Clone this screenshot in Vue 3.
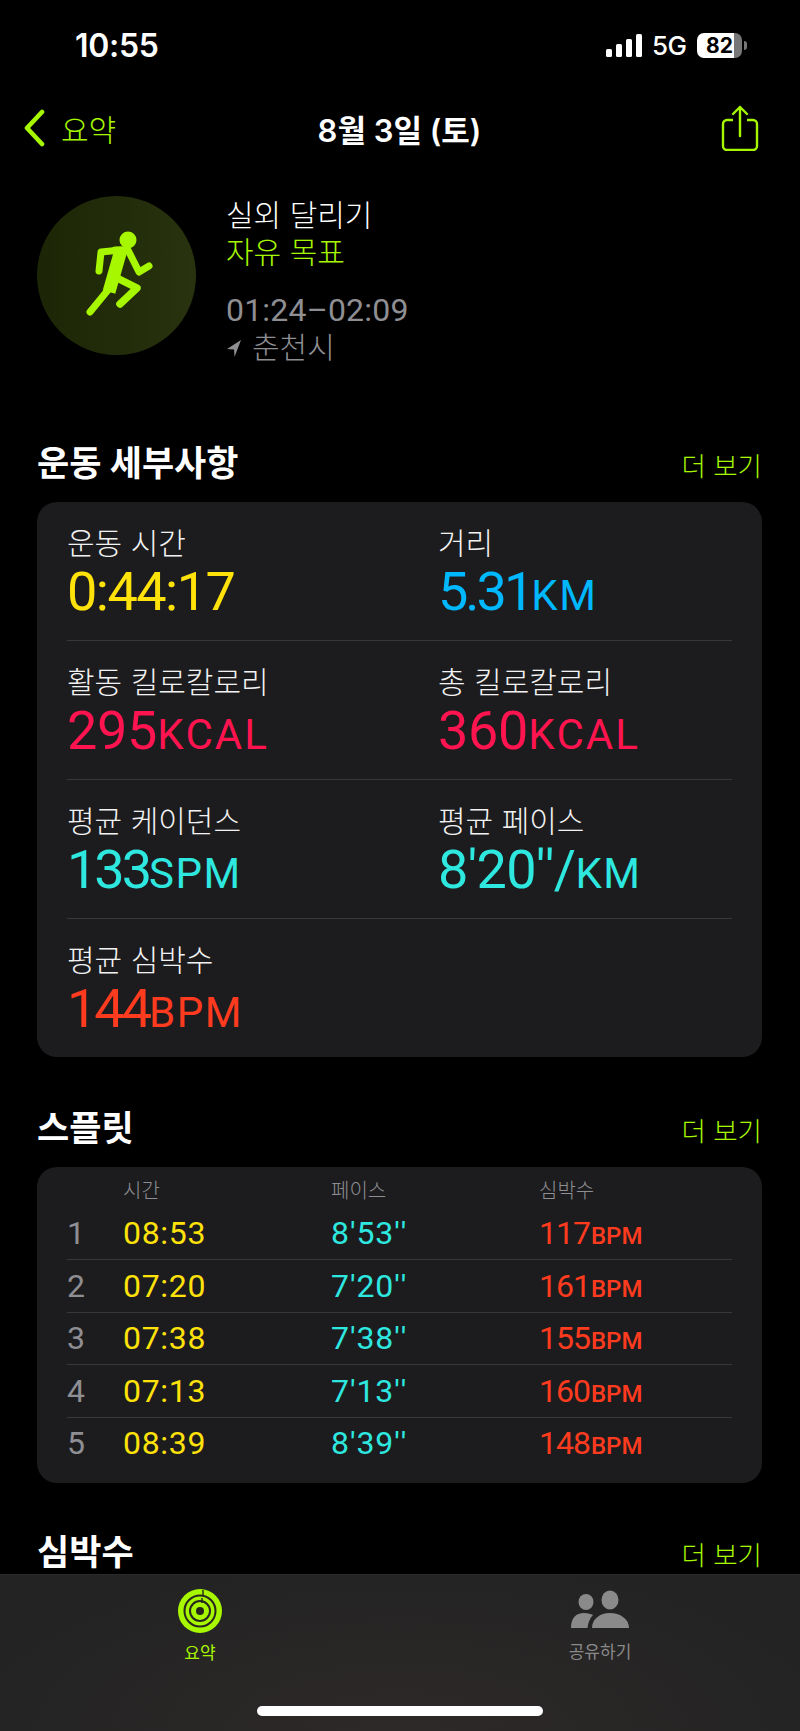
<script setup>
const metrics = [
  [
    { label: '운동 시간', value: '0:44:17', unit: '', color: 'yellow' },
    { label: '거리', value: '5.31', unit: 'KM', color: 'blue tight' }
  ],
  [
    { label: '활동 킬로칼로리', value: '295', unit: 'KCAL', color: 'pink' },
    { label: '총 킬로칼로리', value: '360', unit: 'KCAL', color: 'pink' }
  ],
  [
    { label: '평균 케이던스', value: '133', unit: 'SPM', color: 'cyan tight' },
    { label: '평균 페이스', value: "8'20''/", unit: 'KM', color: 'cyan' }
  ],
  [{ label: '평균 심박수', value: '144', unit: 'BPM', color: 'red tight' }]
]
const splits = [
  ['1', '08:53', "8'53''", '117'],
  ['2', '07:20', "7'20''", '161'],
  ['3', '07:38', "7'38''", '155'],
  ['4', '07:13', "7'13''", '160'],
  ['5', '08:39', "8'39''", '148']
]
</script>

<template>
  <div class="page">
    <main class="main">
      <header class="status">
        <span class="clock">10:55</span>
        <div class="status-right">
          <svg class="signal" width="36" height="23" viewBox="0 0 36 23">
            <rect x="0" y="15" width="6" height="8" rx="1.5" />
            <rect x="10" y="10" width="6" height="13" rx="1.5" />
            <rect x="20" y="5" width="6" height="18" rx="1.5" />
            <rect x="30" y="0" width="6" height="23" rx="1.5" />
          </svg>
          <span class="net">5G</span>
          <span class="battery">82</span>
          <span class="nub"></span>
        </div>
      </header>

      <nav class="nav">
        <div class="back">
          <svg width="24" height="38" viewBox="0 0 24 38">
            <path d="M20 3 L5 19 L20 35" fill="none" stroke="#a6f700" stroke-width="4.6" stroke-linecap="round" stroke-linejoin="round" />
          </svg>
          <span>요약</span>
        </div>
        <div class="nav-title">8월 3일 (토)</div>
        <svg class="share" width="38" height="46" viewBox="0 0 38 46">
          <path d="M12 15 H6 A4 4 0 0 0 2 19 V41 A4 4 0 0 0 6 45 H32 A4 4 0 0 0 36 41 V19 A4 4 0 0 0 32 15 H26" fill="none" stroke="#a6f700" stroke-width="2.4" />
          <path d="M19 31 V2 M12 9 L19 2 L26 9" fill="none" stroke="#a6f700" stroke-width="2.4" stroke-linecap="round" stroke-linejoin="round" />
        </svg>
      </nav>

      <section class="hero">
        <div class="badge">
          <svg width="159" height="159" viewBox="0 0 159 159">
            <circle cx="91" cy="44" r="8.5" fill="#a6f700" />
            <path d="M84 54 L64 56 L62 75" fill="none" stroke="#a6f700" stroke-width="7" stroke-linecap="round" stroke-linejoin="round" />
            <path d="M78 54 H91 L102 76 L112 70" fill="none" stroke="#a6f700" stroke-width="7" stroke-linecap="round" stroke-linejoin="round" />
            <path d="M84 54 L72 96" fill="none" stroke="#a6f700" stroke-width="13" stroke-linecap="butt" />
            <path d="M71 94 L53 116" fill="none" stroke="#a6f700" stroke-width="7" stroke-linecap="round" />
            <path d="M80 82 L100 92 L83 108" fill="none" stroke="#a6f700" stroke-width="7.5" stroke-linecap="round" stroke-linejoin="round" />
          </svg>
        </div>
        <div class="hero-text">
          <div class="hero-name">실외 달리기</div>
          <div class="hero-goal">자유 목표</div>
          <div class="hero-time">01:24–02:09</div>
          <div class="hero-place">
            <svg width="16" height="18" viewBox="0 0 16 18"><path d="M15 1 L1 10 L8 10.5 L8.5 18 Z" fill="#8e8e93" /></svg>
            <span>춘천시</span>
          </div>
        </div>
      </section>

      <div class="sec-head first">
        <h2>운동 세부사항</h2>
        <span class="more">더 보기</span>
      </div>
      <section class="card metrics">
        <div v-for="(row, i) in metrics" :key="i" class="metric-row">
          <div v-for="m in row" :key="m.label" class="metric">
            <div class="metric-label">{{ m.label }}</div>
            <div class="metric-value" :class="m.color">{{ m.value }}<span class="unit">{{ m.unit }}</span></div>
          </div>
        </div>
      </section>

      <div class="sec-head second">
        <h2>스플릿</h2>
        <span class="more">더 보기</span>
      </div>
      <section class="card splits">
        <div class="split-head">
          <span></span><span>시간</span><span>페이스</span><span>심박수</span>
        </div>
        <div v-for="s in splits" :key="s[0]" class="split-row">
          <span class="num">{{ s[0] }}</span>
          <span class="yellow">{{ s[1] }}</span>
          <span class="cyan">{{ s[2] }}</span>
          <span class="red bpm">{{ s[3] }}<span class="s-unit">BPM</span></span>
        </div>
      </section>

      <div class="sec-head third">
        <h2>심박수</h2>
        <span class="more">더 보기</span>
      </div>
    </main>

    <footer class="tabbar">
      <div class="tabs">
        <div class="tab active">
          <svg width="44" height="44" viewBox="0 0 44 44">
            <circle cx="22" cy="22" r="22" fill="#a6f700" />
            <circle cx="22" cy="22" r="15.5" fill="none" stroke="#26261f" stroke-width="2" />
            <circle cx="22" cy="22" r="10" fill="none" stroke="#26261f" stroke-width="2" />
            <circle cx="22" cy="22" r="4" fill="#26261f" />
            <path d="M25 1 V6 M24 9 V14" stroke="#26261f" stroke-width="1.4" />
          </svg>
          <span>요약</span>
        </div>
        <div class="tab">
          <svg class="friends" width="60" height="40" viewBox="0 0 60 40">
            <ellipse cx="16" cy="13" rx="7.5" ry="8" fill="#8a8a8a" />
            <ellipse cx="40" cy="11" rx="8.5" ry="9.5" fill="#8a8a8a" />
            <path d="M1 39 C1 29 6 24 14 24 C18 24 21 25 23 26 C20 29 18 34 17.5 39 Z" fill="#8a8a8a" />
            <path d="M22 39 C22 30 30 24 40 24 C50 24 59 30 59 39 Z" fill="#8a8a8a" />
          </svg>
          <span>공유하기</span>
        </div>
      </div>
      <div class="home"></div>
    </footer>
  </div>
</template>

<style>
body { background: #000; }
</style>

<style scoped>
.page {
  width: 800px;
  height: 1731px;
  background: #000;
  color: #fff;
  display: flex;
  flex-direction: column;
  overflow: hidden;
  font-family: Inter, "Noto Sans CJK KR", sans-serif;
}
.main { flex: 1; min-height: 0; overflow: hidden; }
.status {
  height: 90px;
  padding: 0 53px 0 75px;
  display: flex;
  align-items: center;
  justify-content: space-between;
}
.clock { font-size: 32px; font-weight: 600; letter-spacing: -0.3px; }
.status-right { display: flex; align-items: center; }
.signal { fill: #fff; margin-right: 10px; }
.net { font-size: 26px; font-weight: 500; width: 45px; letter-spacing: -0.5px; }
.battery {
  width: 45px;
  height: 25px;
  border-radius: 7px;
  background: linear-gradient(90deg, #fff 82%, #777 82%);
  color: #000;
  font-size: 21px;
  font-weight: 700;
  line-height: 25px;
  text-align: center;
}
.nub { width: 3px; height: 9px; margin-left: 2px; border-radius: 0 3px 3px 0; background: #777; }
.nav {
  height: 76px;
  padding: 0 41px 0 22px;
  display: grid;
  grid-template-columns: 1fr auto 1fr;
  align-items: center;
}
.back { display: flex; align-items: center; gap: 15px; color: #a6f700; font-size: 30px; font-weight: 300; }
.nav-title { font-size: 31px; font-weight: 600; margin-left: 18px; }
.share { justify-self: end; }
.hero { display: flex; height: 159px; margin: 30px 0 0 37px; gap: 30px; }
.badge {
  width: 159px;
  height: 159px;
  border-radius: 50%;
  background: linear-gradient(90deg, #1c2505, #29330f);
  flex: none;
}
.hero-name, .hero-goal { font-size: 30px; line-height: 38px; font-weight: 300; }
.hero-goal { color: #a6f700; margin-top: -1px; }
.hero-time { font-family: Roboto, sans-serif; font-size: 32px; line-height: 38px; color: #8e8e93; margin-top: 20px; letter-spacing: 0.2px; }
.hero-place { display: flex; align-items: center; gap: 10px; font-size: 30px; line-height: 37px; color: #8e8e93; font-weight: 300; }
.sec-head {
  display: flex;
  justify-content: space-between;
  align-items: center;
  padding: 0 38px 0 37px;
  height: 48px;
}
.sec-head h2 { margin: 0; font-size: 35px; font-weight: 700; }
.more { color: #a6f700; font-size: 26.5px; font-weight: 300; margin-top: 8px; }
.first { margin-top: 81px; }
.second { margin-top: 44px; }
.third { margin-top: 42px; }
.card {
  margin: 0 38px 0 37px;
  background: #1c1c1e;
  border-radius: 20px;
}
.metrics { margin-top: 18px; padding: 0 30px; height: 555px; }
.metric-row {
  display: grid;
  grid-template-columns: 371px 1fr;
  height: 139px;
  padding-top: 21px;
  box-sizing: border-box;
  border-top: 1px solid #38383a;
}
.metric-row:first-child { border-top: 0; height: 138px; }
.metric-label { font-size: 30px; line-height: 40px; color: #f2f2f2; font-weight: 300; }
.metric-value {
  font-family: Roboto, sans-serif;
  font-size: 54px;
  line-height: 57px;
  letter-spacing: -1.5px;
  font-kerning: none;
  font-variant-ligatures: none;
}
.unit { font-size: 42px; letter-spacing: 1.5px; }
.yellow { color: #ffe20a; }
.blue { color: #00b8ff; }
.pink { color: #ff1450; letter-spacing: -0.3px; }
.pink .unit { letter-spacing: 2px; }
.cyan { color: #2ee8e0; letter-spacing: -0.6px; }
.red { color: #ff3b1f; }
.tight { letter-spacing: -3px; }
.tight .unit { letter-spacing: 1.5px; }
.splits { margin-top: 18px; padding: 0 30px; height: 316px; }
.split-head {
  display: grid;
  grid-template-columns: 56px 208px 208px 1fr;
  height: 40px;
  padding-top: 9px;
  box-sizing: border-box;
  color: #8e8e93;
  font-size: 20px;
  line-height: 30px;
  font-weight: 300;
}
.split-row {
  display: grid;
  grid-template-columns: 56px 208px 208px 1fr;
  align-items: center;
  height: 52.4px;
  box-sizing: border-box;
  font-family: Roboto, sans-serif;
  font-size: 32px;
  letter-spacing: 0.7px;
  font-kerning: none;
  font-variant-ligatures: none;
  border-top: 1px solid #38383a;
}
.split-row:nth-child(2) { border-top: 0; }
.split-row .cyan { letter-spacing: 0.9px; }
.num { color: #8e8e93; }
.bpm { letter-spacing: -1px; }
.s-unit { font-size: 24px; letter-spacing: 0; font-weight: 500; margin-left: 1px; }
.tabbar {
  height: 157px;
  flex: none;
  background: radial-gradient(ellipse at 50% 100%, #2d2928, #232323 80%);
  border-top: 1px solid #2a2a2a;
  box-sizing: border-box;
  position: relative;
}
.tabs { display: grid; grid-template-columns: 1fr 1fr; padding-top: 14px; }
.tab { display: flex; flex-direction: column; align-items: center; gap: 6px; color: #8a8a8a; font-size: 17px; }
.friends { margin-bottom: 3px; }
.tab.active { color: #a6f700; }
.home {
  position: absolute;
  left: 257px;
  bottom: 15px;
  width: 286px;
  height: 10px;
  border-radius: 5px;
  background: #fff;
}
</style>
